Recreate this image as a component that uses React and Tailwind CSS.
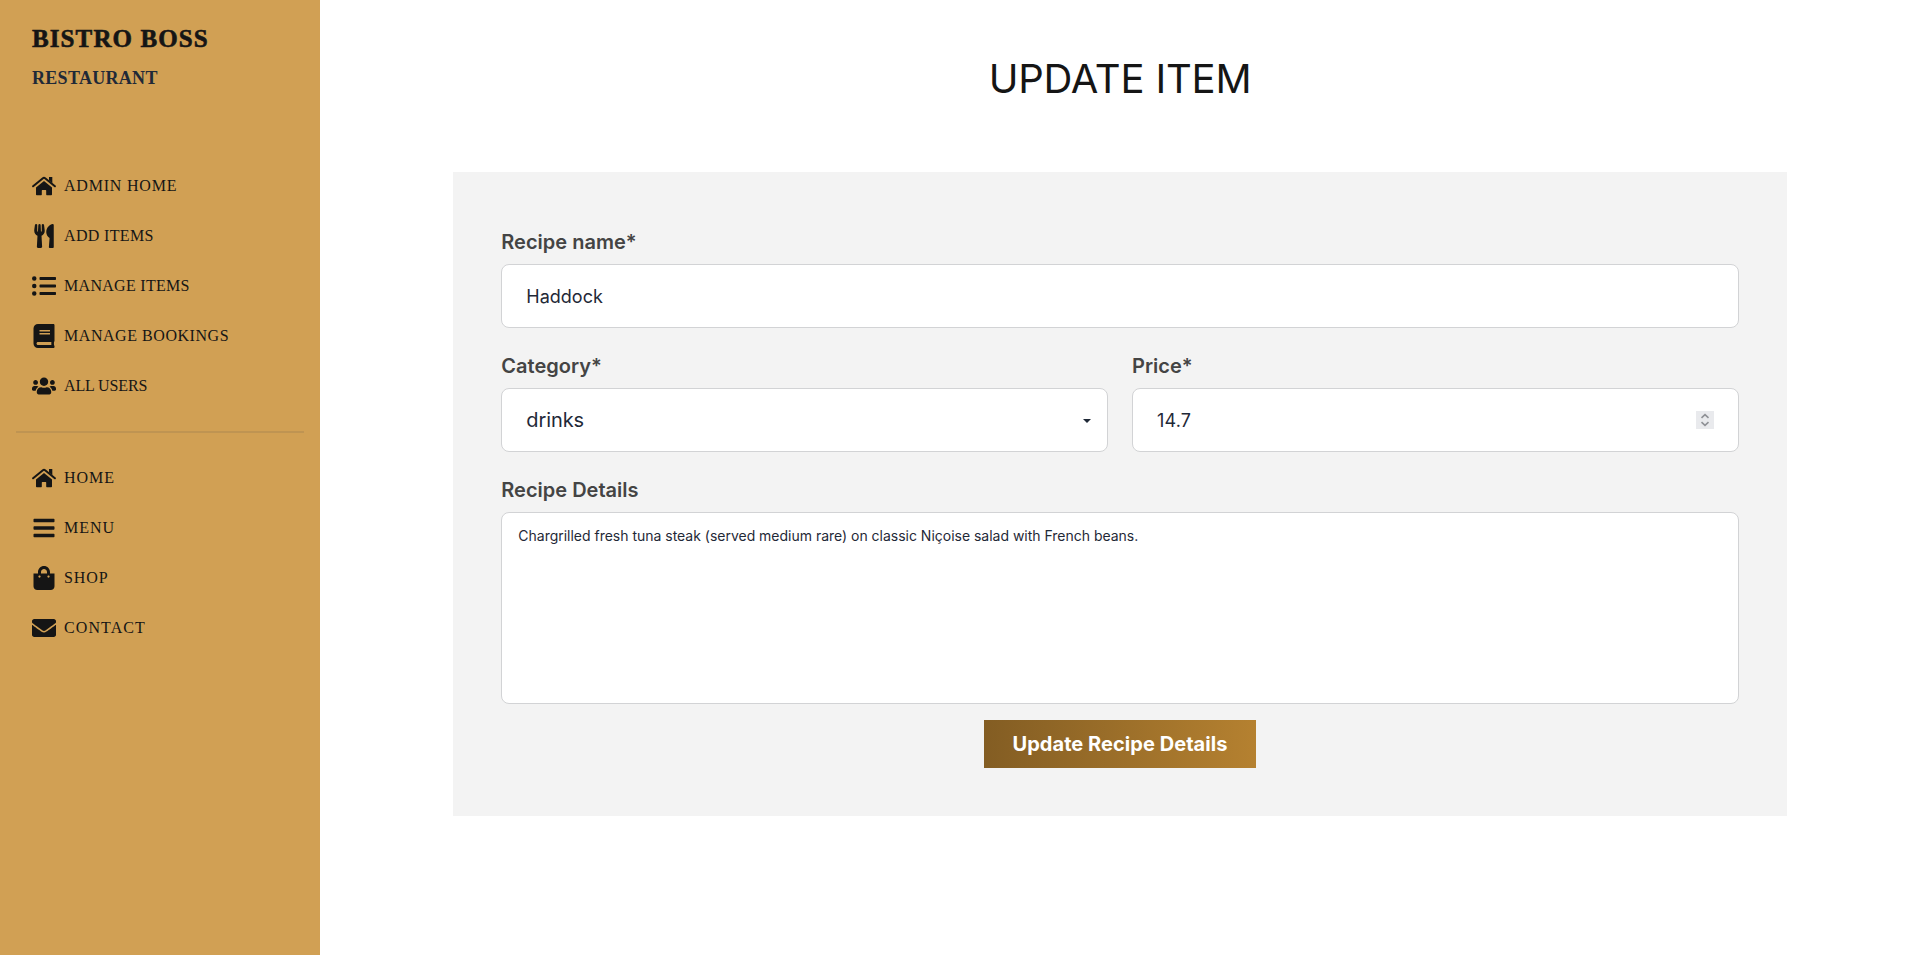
import {
  FaUtensils,
  FaListUl,
  FaBook,
  FaUsers,
  FaBars,
  FaShoppingBag,
  FaEnvelope,
} from "react-icons/fa";

function HomeIcon({ className }) {
  return (
    <svg className={className} viewBox="0 0 24 24" fill="currentColor">
      <path d="M17 3h3.3v6.2L17 6.4z" />
      <path
        d="M1.1 12.3 10.9 4.2q1.1-.9 2.2 0l9.8 8.1"
        fill="none"
        stroke="currentColor"
        strokeWidth="2"
        strokeLinecap="round"
        strokeLinejoin="round"
      />
      <path d="M12 6.9 20 13.5V20.4q0 .8-.8.8H14.8q-.6 0-.6-.6V16.4q0-.4-.4-.4H10.2q-.4 0-.4.4V20.6q0 .6-.6.6H4.8q-.8 0-.8-.8V13.5z" />
    </svg>
  );
}

const adminLinks = [
  { label: "ADMIN HOME", Icon: HomeIcon, tracking: "tracking-[0.8px]" },
  { label: "ADD ITEMS", Icon: FaUtensils, tracking: "tracking-[0.35px]" },
  { label: "MANAGE ITEMS", Icon: FaListUl, tracking: "tracking-[0.3px]" },
  { label: "MANAGE BOOKINGS", Icon: FaBook, tracking: "tracking-[0.55px]" },
  { label: "ALL USERS", Icon: FaUsers, tracking: "tracking-[-0.12px]" },
];

const siteLinks = [
  { label: "HOME", Icon: HomeIcon, tracking: "tracking-[1px]" },
  { label: "MENU", Icon: FaBars, tracking: "tracking-[1px]" },
  { label: "SHOP", Icon: FaShoppingBag, tracking: "tracking-[0.9px]" },
  { label: "CONTACT", Icon: FaEnvelope, tracking: "tracking-[1.1px]" },
];

function NavList({ links }) {
  return (
    <ul className="flex flex-col px-8">
      {links.map(({ label, Icon, tracking }) => (
        <li key={label} className="flex h-[50px] items-center gap-2">
          <Icon className="size-6 shrink-0" />
          <span className={`text-base leading-6 whitespace-nowrap ${tracking}`}>{label}</span>
        </li>
      ))}
    </ul>
  );
}

function Field({ label, children }) {
  return (
    <div className="flex flex-1 flex-col">
      <label className="py-2 text-xl font-semibold text-[#444444]">{label}</label>
      {children}
    </div>
  );
}

const box = "rounded-lg border border-[#d2d3d5] bg-white text-[#1f2937]";

export default function App() {
  return (
    <div className="flex h-[955px] w-full overflow-hidden bg-white font-['Inter',sans-serif]">
      <aside className="w-80 shrink-0 bg-[#d1a054] font-['Liberation_Serif',serif] text-[#151515]">
        <div className="px-8 pt-[21px]">
          <h2 className="text-[25px] leading-9 font-bold tracking-[1.1px] whitespace-nowrap [-webkit-text-stroke:0.6px_#151515]">
            BISTRO BOSS
          </h2>
          <h3 className="mt-[3px] text-lg leading-9 font-bold tracking-[0.3px] text-[#1f2937]">RESTAURANT</h3>
        </div>
        <div className="pt-[65px]">
          <NavList links={adminLinks} />
          <div className="mx-4 mt-5 mb-5 h-0.5 bg-[#bf9452]" />
          <NavList links={siteLinks} />
        </div>
      </aside>

      <main className="flex flex-1 flex-col items-center">
        <h1 className="pt-[49px] text-[40px] leading-[60px] tracking-[-0.2px] text-[#151515]">UPDATE ITEM</h1>
        <form className="mt-[63px] flex w-5/6 flex-col gap-4 bg-[#f3f3f3] p-12">
          <Field label="Recipe name*">
            <div className={`flex h-16 items-center px-6 pt-0.5 text-lg ${box}`}>Haddock</div>
          </Field>
          <div className="flex gap-6">
            <Field label="Category*">
              <div className={`flex h-16 items-center justify-between pr-4 pl-6 text-xl tracking-[-0.1px] ${box}`}>
                drinks
                <svg className="mt-px h-1 w-2" viewBox="0 0 8 4" fill="currentColor">
                  <path d="M0 0h8L4 4z" />
                </svg>
              </div>
            </Field>
            <Field label="Price*">
              <div className={`flex h-16 items-center justify-between px-6 text-lg ${box}`}>
                <span className="pt-0.5 tracking-[0.15px]">14.7</span>
                <svg className="size-[18px] bg-[#e9eaed]" viewBox="0 0 18 18" fill="none" stroke="#8f9196" strokeWidth="1.6">
                  <path d="M5.5 6.8 9 3.6l3.5 3.2M5.5 11.2 9 14.4l3.5-3.2" />
                </svg>
              </div>
            </Field>
          </div>
          <Field label="Recipe Details">
            <div className={`h-48 px-4 py-[11px] text-sm leading-6 tracking-[-0.013px] ${box}`}>
              Chargrilled fresh tuna steak (served medium rare) on classic Niçoise salad with French beans.
            </div>
          </Field>
          <button
            type="button"
            className="h-12 w-[272px] self-center bg-linear-to-r from-[#835d23] to-[#b58130] text-xl font-bold tracking-[0.05px] whitespace-nowrap text-white"
          >
            Update Recipe Details
          </button>
        </form>
      </main>
    </div>
  );
}
